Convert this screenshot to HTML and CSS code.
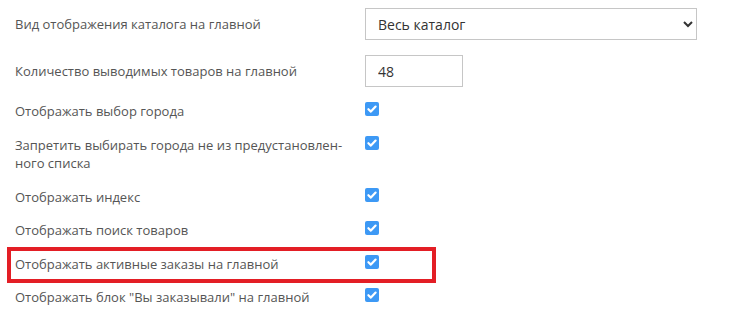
FILE: index.html
```html
<!DOCTYPE html>
<html lang="ru">
<head>
<meta charset="utf-8">
<link rel="stylesheet" href="styles.css">
</head>
<body>
<form class="settings">
  <div class="row">
    <label class="label label-field">Вид отображения каталога на главной</label>
    <div class="control">
      <select class="select">
        <option>Весь каталог</option>
      </select>
    </div>
  </div>
  <div class="row">
    <label class="label label-field">Количество выводимых товаров на главной</label>
    <div class="control">
      <input class="input" type="text" value="48">
    </div>
  </div>
  <div class="row">
    <label class="label">Отображать выбор города</label>
    <div class="control"><span class="check"><svg viewBox="0 0 14 14" width="14" height="14"><path d="M3.4 7.2 L5.9 9.6 L10.6 4.6" fill="none" stroke="#fff" stroke-width="2.2" stroke-linecap="round" stroke-linejoin="round"/></svg></span></div>
  </div>
  <div class="row">
    <label class="label">Запретить выбирать города не из предустановлен-<br>ного списка</label>
    <div class="control"><span class="check"><svg viewBox="0 0 14 14" width="14" height="14"><path d="M3.4 7.2 L5.9 9.6 L10.6 4.6" fill="none" stroke="#fff" stroke-width="2.2" stroke-linecap="round" stroke-linejoin="round"/></svg></span></div>
  </div>
  <div class="row">
    <label class="label">Отображать индекс</label>
    <div class="control"><span class="check"><svg viewBox="0 0 14 14" width="14" height="14"><path d="M3.4 7.2 L5.9 9.6 L10.6 4.6" fill="none" stroke="#fff" stroke-width="2.2" stroke-linecap="round" stroke-linejoin="round"/></svg></span></div>
  </div>
  <div class="row">
    <label class="label">Отображать поиск товаров</label>
    <div class="control"><span class="check"><svg viewBox="0 0 14 14" width="14" height="14"><path d="M3.4 7.2 L5.9 9.6 L10.6 4.6" fill="none" stroke="#fff" stroke-width="2.2" stroke-linecap="round" stroke-linejoin="round"/></svg></span></div>
  </div>
  <div class="row highlighted">
    <label class="label">Отображать активные заказы на главной</label>
    <div class="control"><span class="check"><svg viewBox="0 0 14 14" width="14" height="14"><path d="M3.4 7.2 L5.9 9.6 L10.6 4.6" fill="none" stroke="#fff" stroke-width="2.2" stroke-linecap="round" stroke-linejoin="round"/></svg></span></div>
    <span class="highlight-frame"></span>
  </div>
  <div class="row">
    <label class="label">Отображать блок "Вы заказывали" на главной</label>
    <div class="control"><span class="check"><svg viewBox="0 0 14 14" width="14" height="14"><path d="M3.4 7.2 L5.9 9.6 L10.6 4.6" fill="none" stroke="#fff" stroke-width="2.2" stroke-linecap="round" stroke-linejoin="round"/></svg></span></div>
  </div>
</form>
</body>
</html>
```

FILE: styles.css
```css
html, body {
  margin: 0;
  padding: 0;
  background: #fff;
}

body {
  font-family: "Open Sans", "Liberation Sans", sans-serif;
  font-size: 13px;
  line-height: 18.57px;
  color: #555;
}

.settings {
  padding-top: 8px;
}

.row {
  display: flex;
  align-items: flex-start;
  margin-bottom: 15px;
  position: relative;
}

.label {
  flex: 0 0 365px;
  box-sizing: border-box;
  padding: 0 15px;
  white-space: nowrap;
}

.label-field {
  padding-top: 7px;
}

.control {
  flex: 1 1 auto;
  display: flex;
}

.select {
  box-sizing: border-box;
  width: 332px;
  height: 32px;
  border: 1px solid #c6c6c6;
  border-radius: 0;
  background: #fff;
  padding: 0 8px;
  font-family: "Open Sans", "Liberation Sans", sans-serif;
  font-size: 14px;
  color: #333;
}

.input {
  box-sizing: border-box;
  width: 98px;
  height: 32px;
  border: 1px solid #c6c6c6;
  border-radius: 0;
  padding: 0 12px;
  font-family: "Open Sans", "Liberation Sans", sans-serif;
  font-size: 14px;
  color: #333;
  outline: none;
}

.check {
  display: block;
  width: 14px;
  height: 14px;
  margin-top: 0;
  background: #3d99f5;
  border-radius: 2px;
}

.check svg {
  display: block;
}

.highlight-frame {
  position: absolute;
  left: 7px;
  top: -8px;
  width: 429px;
  height: 36px;
  box-sizing: border-box;
  border: 4px solid #e31e25;
  pointer-events: none;
}
```
